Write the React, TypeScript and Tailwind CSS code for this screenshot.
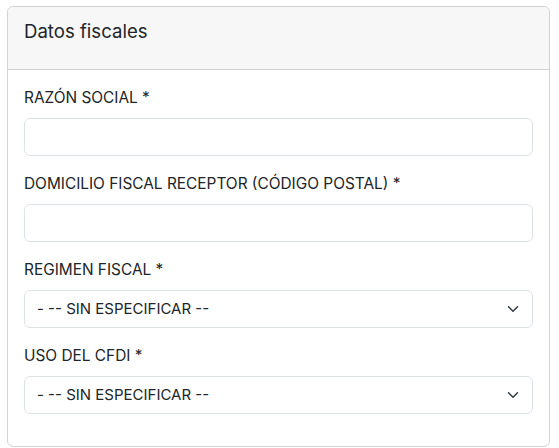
import React from 'react';

const fields = [
  { label: 'RAZÓN SOCIAL *', type: 'input' },
  { label: 'DOMICILIO FISCAL RECEPTOR (CÓDIGO POSTAL) *', type: 'input' },
  { label: 'REGIMEN FISCAL *', type: 'select' },
  { label: 'USO DEL CFDI *', type: 'select' },
];

function Chevron() {
  return (
    <svg width="16" height="12" viewBox="0 0 16 16" className="pointer-events-none absolute right-3 top-1/2 -translate-y-1/2">
      <path d="M2 5l6 6 6-6" fill="none" stroke="#343a40" strokeWidth="2" strokeLinecap="round" strokeLinejoin="round" />
    </svg>
  );
}

export default function App() {
  return (
    <div className="min-h-screen bg-white pt-[6px] pl-[7px] pr-[9px] text-[#212529]" style={{ fontFamily: 'Inter, "Noto Sans", sans-serif' }}>
      <div className="rounded-md border border-[#d3d3d3] bg-white">
        <div className="rounded-t-md border-b border-[#d3d3d3] bg-[#f7f7f7] px-4 pt-[13px] pb-[27px]">
          <h5 className="text-[18.6px] leading-[22px]">Datos fiscales</h5>
        </div>
        <div className="px-4 pt-4 pb-4">
          {fields.map((f) => (
            <div key={f.label} className="mb-4">
              <label className="mb-2 block text-[15.4px] leading-6">{f.label}</label>
              {f.type === 'input' ? (
                <input className="block h-[38px] w-full rounded-md border border-[#dee2e6] bg-white px-3 outline-none" />
              ) : (
                <div className="relative">
                  <select className="block h-[38px] w-full appearance-none rounded-md border border-[#dee2e6] bg-white pl-3 pr-9 text-[15px] text-[#212529] outline-none" style={{ fontFamily: 'inherit' }}>
                    <option>- -- SIN ESPECIFICAR --</option>
                  </select>
                  <Chevron />
                </div>
              )}
            </div>
          ))}
        </div>
      </div>
    </div>
  );
}
